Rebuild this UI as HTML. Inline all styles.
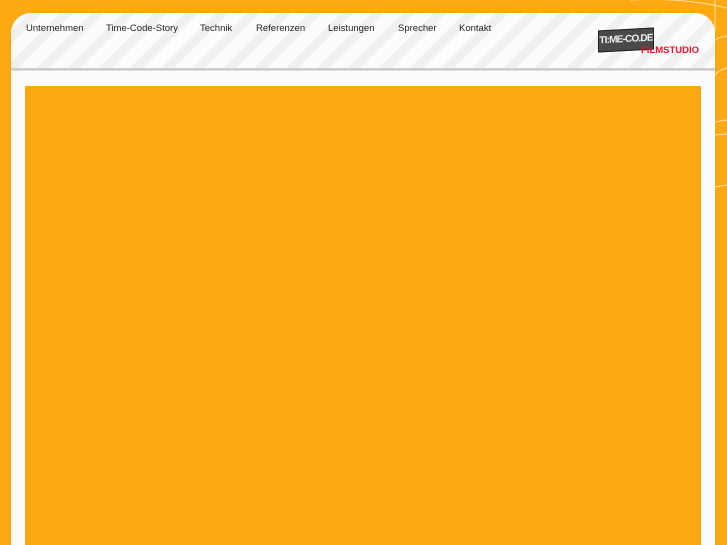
<!DOCTYPE html>
<html><head><meta charset="utf-8"><style>
html,body{margin:0;padding:0;width:727px;height:545px;overflow:hidden;background:#FFA912;font-family:"Liberation Sans",sans-serif;position:relative;}
#panel{position:absolute;left:11px;top:13px;width:704px;height:532px;background:#fcfcfc;border-radius:20px 20px 0 0;overflow:hidden;}
#head{position:absolute;left:0;top:0;width:704px;height:55px;border-radius:20px 20px 0 0;
background:repeating-linear-gradient(135deg,#fcfcfc 0 13px,#f0f0f0 13px 22px);}
#line{position:absolute;left:0;top:55px;width:704px;height:3px;background:linear-gradient(#d4d4d4,#c4c4c4,#ececec);}
nav{position:absolute;top:10px;left:15px;font-size:9.5px;color:#222;}
nav span{position:absolute;white-space:nowrap;}
#inner{position:absolute;left:25px;top:86px;width:676px;height:459px;background:#FFA912;}
#logo{position:absolute;left:598px;top:29px;width:54px;height:20px;background:#4a4a4a;border:1px solid #222;transform:skewY(-3deg);color:#eee;font-size:10px;font-weight:bold;line-height:20px;text-align:center;letter-spacing:-0.8px;white-space:nowrap;overflow:hidden;}
#fs{position:absolute;left:641px;top:45px;color:#e8132b;font-size:9.5px;font-weight:bold;white-space:nowrap;}
svg{position:absolute;left:0;top:0}
</style></head><body>
<svg width="727" height="545"><g fill="none" stroke="#ffe2a8" stroke-width="1">
<path d="M630 0 A150 60 0 0 1 727 8"/><line x1="715" y1="0" x2="715" y2="30"/>
<path d="M715 40 A25 18 0 0 1 727 36"/><path d="M715 75 A20 20 0 0 1 727 68"/>
<line x1="715" y1="122" x2="727" y2="120"/><line x1="715" y1="135" x2="727" y2="134"/>
<line x1="715" y1="187" x2="727" y2="185"/></g></svg>
<div id="panel"><div id="head"></div><div id="line"></div>
<nav><span style="left:0">Unternehmen</span><span style="left:80px">Time-Code-Story</span><span style="left:174px">Technik</span><span style="left:230px">Referenzen</span><span style="left:302px">Leistungen</span><span style="left:372px">Sprecher</span><span style="left:433px">Kontakt</span></nav>
</div>
<div id="logo">TI:ME-CO.DE</div><div id="fs">FiLMSTUDIO</div>
<div id="inner"></div>
</body></html>
